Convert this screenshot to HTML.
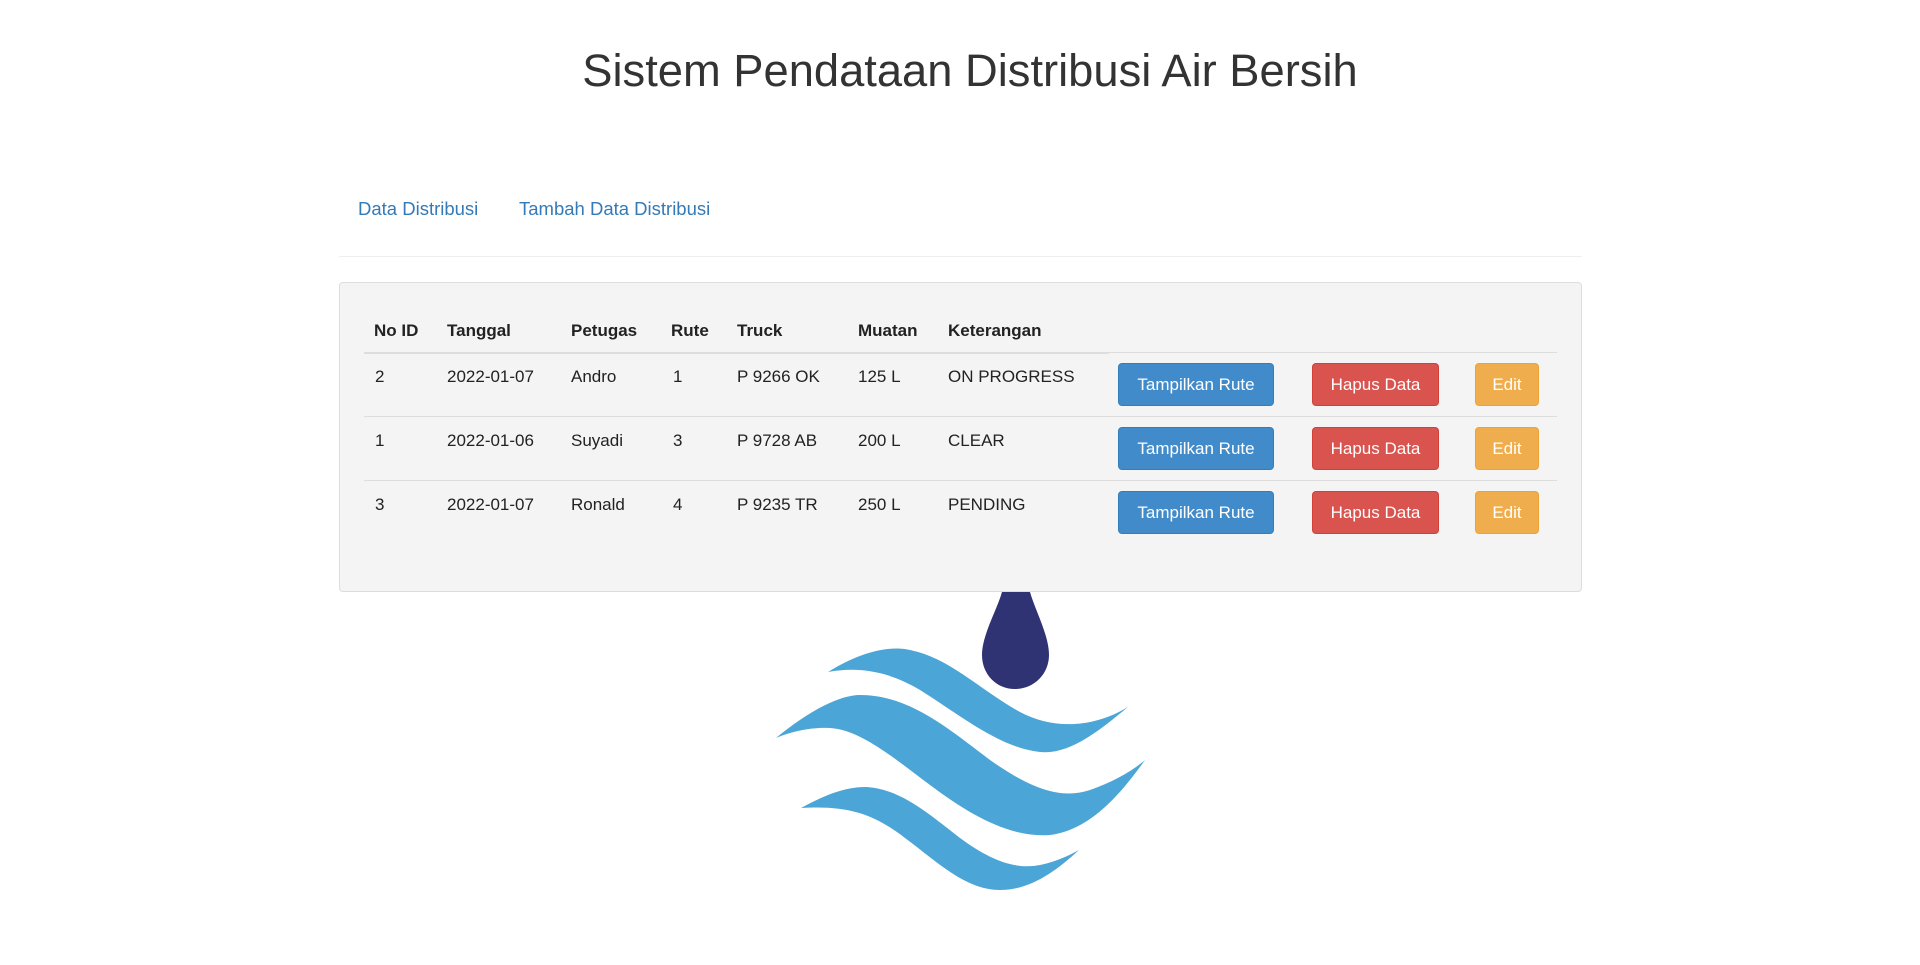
<!DOCTYPE html>
<html><head><meta charset="utf-8"><style>
*{box-sizing:border-box;margin:0;padding:0}
body{width:1920px;height:965px;background:#fff;font-family:"Liberation Sans",sans-serif;color:#333;position:relative;overflow:hidden}
h1{position:absolute;top:45px;left:0;width:1940px;text-align:center;font-weight:400;font-size:45.3px;color:#333}
.nav a{position:absolute;top:198px;font-size:18.5px;color:#337ab7;text-decoration:none}
.hr{position:absolute;left:339px;width:1243px;top:256px;height:1px;background:#eee}
.panel{position:absolute;left:339px;top:282px;width:1243px;height:310px;background:#f4f4f4;border:1px solid #ddd;border-radius:4px}
.t{position:absolute;font-size:17px;color:#222}
.h{font-weight:bold}
.line{position:absolute;left:364px;width:1193px;height:1px;background:#ddd}
.btn{position:absolute;height:43px;border-radius:4px;color:#fff;font-size:17px;display:flex;align-items:center;justify-content:center}
.b{background:#428bca;border:1px solid #357ebd}
.r{background:#d9534f;border:1px solid #d43f3a}
.y{background:#f0ad4e;border:1px solid #eea236}
</style></head><body>
<h1>Sistem Pendataan Distribusi Air Bersih</h1>
<div class="nav"><a style="left:358px">Data Distribusi</a><a style="left:519px">Tambah Data Distribusi</a></div>
<div class="hr"></div>
<div class="panel"></div>
<div class="t h" style="left:374px;top:321px">No ID</div>
<div class="t h" style="left:447px;top:321px">Tanggal</div>
<div class="t h" style="left:571px;top:321px">Petugas</div>
<div class="t h" style="left:671px;top:321px">Rute</div>
<div class="t h" style="left:737px;top:321px">Truck</div>
<div class="t h" style="left:858px;top:321px">Muatan</div>
<div class="t h" style="left:948px;top:321px">Keterangan</div>
<div class="line" style="top:352px;height:2px;width:745px"></div>
<div class="line" style="top:352px"></div>
<div class="line" style="top:416px"></div>
<div class="line" style="top:480px"></div>

<div class="t" style="left:375px;top:367px">2</div><div class="t" style="left:447px;top:367px">2022-01-07</div><div class="t" style="left:571px;top:367px">Andro</div><div class="t" style="left:673px;top:367px">1</div><div class="t" style="left:737px;top:367px">P 9266 OK</div><div class="t" style="left:858px;top:367px">125 L</div><div class="t" style="left:948px;top:367px">ON PROGRESS</div>
<div class="t" style="left:375px;top:431px">1</div><div class="t" style="left:447px;top:431px">2022-01-06</div><div class="t" style="left:571px;top:431px">Suyadi</div><div class="t" style="left:673px;top:431px">3</div><div class="t" style="left:737px;top:431px">P 9728 AB</div><div class="t" style="left:858px;top:431px">200 L</div><div class="t" style="left:948px;top:431px">CLEAR</div>
<div class="t" style="left:375px;top:495px">3</div><div class="t" style="left:447px;top:495px">2022-01-07</div><div class="t" style="left:571px;top:495px">Ronald</div><div class="t" style="left:673px;top:495px">4</div><div class="t" style="left:737px;top:495px">P 9235 TR</div><div class="t" style="left:858px;top:495px">250 L</div><div class="t" style="left:948px;top:495px">PENDING</div>

<div class="btn b" style="left:1118px;top:363px;width:156px">Tampilkan Rute</div><div class="btn r" style="left:1312px;top:363px;width:127px">Hapus Data</div><div class="btn y" style="left:1475px;top:363px;width:64px">Edit</div>
<div class="btn b" style="left:1118px;top:427px;width:156px">Tampilkan Rute</div><div class="btn r" style="left:1312px;top:427px;width:127px">Hapus Data</div><div class="btn y" style="left:1475px;top:427px;width:64px">Edit</div>
<div class="btn b" style="left:1118px;top:491px;width:156px">Tampilkan Rute</div><div class="btn r" style="left:1312px;top:491px;width:127px">Hapus Data</div><div class="btn y" style="left:1475px;top:491px;width:64px">Edit</div>

<svg style="position:absolute;left:760px;top:590px" width="420" height="330" viewBox="0 0 420 330">
<g fill="#4ba5d7">
<path d="M68,82 C100,62 130,55 150,60 C190,68 220,100 260,122 C290,138 330,140 368,117 C340,140 310,165 280,162 C240,158 200,125 160,100 C130,82 100,76 68,82Z"/>
<path d="M16,148 C50,120 80,105 100,105 C150,105 190,140 230,170 C270,198 300,210 330,200 C350,193 370,183 385,170 C360,205 330,240 290,245 C250,248 210,225 170,195 C130,165 100,140 70,138 C50,137 30,142 16,148Z"/>
<path d="M41,218 C65,205 85,197 105,197 C140,198 170,225 200,248 C230,270 255,280 280,275 C295,272 308,266 319,260 C295,282 270,300 240,300 C205,300 175,270 145,248 C115,225 90,215 41,218Z"/>
</g>
<path fill="#2f3273" d="M242,2 L270,2 C275,20 289,45 289,65 C289,84 274,99 255,99 C236,99 222,84 222,65 C222,45 237,20 242,2Z"/>
</svg>
</body></html>
